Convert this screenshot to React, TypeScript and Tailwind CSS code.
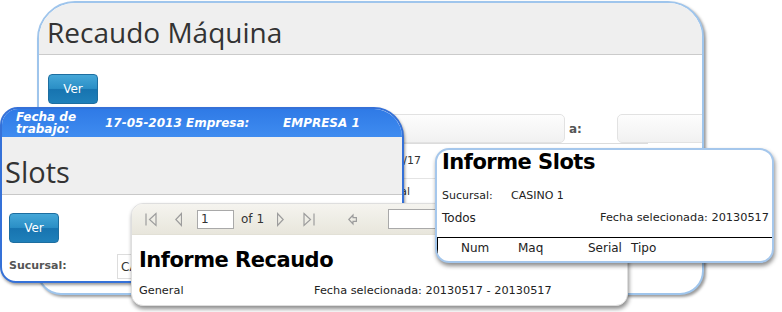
import type { ReactNode } from 'react';

const btn =
  "flex h-[30px] w-[50px] items-center justify-center rounded-[4px] border border-[#1d6ea0] bg-[linear-gradient(#45a7d8,#2b8fc6_48%,#1774b0_52%,#1f80ba)] text-[12px] text-white";

function VerButton() {
  return <div className={btn}>Ver</div>;
}

function Icon({ children, w = 12 }: { children: ReactNode; w?: number }) {
  return (
    <svg width={w} height="15" viewBox={`0 0 ${w} 15`} fill="none" stroke="#9d9d9d" strokeWidth="1.2">
      {children}
    </svg>
  );
}

function RecaudoMaquina() {
  return (
    <div className="absolute left-[37px] top-[1px] h-[294px] w-[667px] overflow-hidden rounded-tl-[38px] rounded-tr-[36px] rounded-bl-[24px] rounded-br-[24px] border-2 border-[#9fc5ec] bg-white shadow-[2px_2px_3px_rgba(0,0,0,0.4)]">
      <div className="h-[52px] border-b border-[#cbcbcb] bg-[#efefef] pl-[8px] pt-[15px]">
        <div className="font-['Open_Sans',sans-serif] text-[28px] leading-none text-[#333]">Recaudo Máquina</div>
      </div>
      <div className="pl-[9px] pt-[19px]">
        <VerButton />
        <div className="mt-[10px] flex h-[29px] items-center">
          <div className="ml-[332px] h-[29px] w-[185px] shrink-0 rounded-[5px] border border-[#e2e2e2] bg-[linear-gradient(#fdfdfd,#f1f1f1)]" />
          <div className="w-[52px] shrink-0 pl-[4px] text-[12px] font-bold text-[#555]">a:</div>
          <div className="h-[29px] w-[120px] shrink-0 rounded-[5px] border border-[#e2e2e2] bg-[linear-gradient(#fdfdfd,#f1f1f1)]" />
        </div>
        <div className="ml-[300px] w-[300px] border-t border-[#dcdcdc]">
          <div className="flex h-[35px] items-center border-b border-[#e4e4e4]">
            <span className="w-[73px] text-right text-[11px] text-[#333]">2013/05/17</span>
          </div>
          <div className="flex h-[26px] items-center">
            <span className="w-[62px] text-right text-[11px] text-[#333]">Sucursal</span>
          </div>
        </div>
      </div>
    </div>
  );
}

function Slots() {
  return (
    <div className="absolute left-0 top-[107px] h-[176px] w-[404px] overflow-hidden rounded-tl-[18px] rounded-tr-[30px] rounded-bl-[16px] border-2 border-[#3571d8] bg-white shadow-[1px_2px_3px_rgba(0,0,0,0.4)]">
      <div className="flex h-[28px] items-center bg-[linear-gradient(#2f7ae6,#3f8cf0)] text-[12px] font-bold italic text-white">
        <div className="w-[103px] pl-[14px] leading-[12.5px]">
          Fecha de
          <br />
          trabajo:
        </div>
        <div className="w-[178px]">17-05-2013 Empresa:</div>
        <div>EMPRESA 1</div>
      </div>
      <div className="h-[58px] border-b border-[#c8c8c8] bg-[#efefef] pl-[3px] pt-[20px]">
        <div className="font-['Open_Sans',sans-serif] text-[29px] leading-none text-[#333]">Slots</div>
      </div>
      <div className="pl-[7px] pt-[18px]">
        <VerButton />
        <div className="mt-[11px] flex h-[25px] items-center">
          <div className="w-[108px] text-[11px] font-bold text-[#555]">Sucursal:</div>
          <div className="flex h-[25px] w-[200px] items-center border border-[#dddddd] bg-white pl-[3px] text-[12px] text-[#333]">
            CA
          </div>
        </div>
      </div>
    </div>
  );
}

function InformeRecaudo() {
  return (
    <div className="absolute left-[131px] top-[203px] h-[103px] w-[497px] overflow-hidden rounded-[12px] border border-[#dedede] bg-white shadow-[1px_3px_4px_rgba(0,0,0,0.45)]">
      <div className="flex h-[31px] items-center border-b border-[#e2e0d6] bg-[linear-gradient(#f5f4ef,#e8e6dc)] pl-[13px] text-[12px] text-[#333]">
        <Icon>
          <path d="M1 1.5v12M11 1.5L4.5 7.5 11 13.5z" />
        </Icon>
        <div className="ml-[18px]">
          <Icon w={7}>
            <path d="M6.5 1.5L0.8 7.5 6.5 13.5z" />
          </Icon>
        </div>
        <div className="ml-[15px] flex h-[19px] w-[37px] items-center border border-[#a9a9a9] bg-white pl-[3px]">1</div>
        <div className="ml-[7px]">of 1</div>
        <div className="ml-[13px]">
          <Icon w={7}>
            <path d="M0.5 1.5L6.2 7.5 0.5 13.5z" />
          </Icon>
        </div>
        <div className="ml-[19px]">
          <Icon>
            <path d="M1 1.5L7.5 7.5 1 13.5zM11 1.5v12" />
          </Icon>
        </div>
        <div className="ml-[33px]">
          <Icon w={9}>
            <path d="M0.8 7.5L5 3v2.6h3.4v3.8H5V12z" />
          </Icon>
        </div>
        <div className="ml-[31px] h-[20px] w-[200px] border border-[#a9a9a9] bg-white" />
      </div>
      <div className="pl-[7px] pt-[15px]">
        <div className="text-[21px] font-bold leading-none tracking-[-0.5px] text-black">Informe Recaudo</div>
        <div className="mt-[13px] flex text-[11.3px] leading-[13px] text-[#222]">
          <span className="w-[175px]">General</span>
          <span>Fecha selecionada: 20130517 - 20130517</span>
        </div>
      </div>
    </div>
  );
}

function InformeSlots() {
  return (
    <div className="absolute left-[435px] top-[148px] h-[115px] w-[339px] overflow-hidden rounded-[14px] border-2 border-[#a5c7ec] bg-white shadow-[1px_3px_4px_rgba(0,0,0,0.45)]">
      <div className="pl-[5px] pt-[2px]">
        <div className="text-[21px] font-bold leading-none tracking-[-0.5px] text-black">Informe Slots</div>
        <div className="mt-[16px] flex text-[11px] leading-[13px] text-[#222]">
          <span className="w-[69px]">Sucursal:</span>
          <span>CASINO 1</span>
        </div>
        <div className="mt-[9px] flex items-center justify-between pr-[3px] text-[#222]">
          <span className="text-[12px] leading-[14px]">Todos</span>
          <span className="text-[11.3px] leading-[14px]">Fecha selecionada: 20130517</span>
        </div>
      </div>
      <div className="mt-[12px] flex h-[30px] border-l border-t border-black pt-[3px] text-[12px] leading-[14px] text-[#222]">
        <span className="w-[80px] pl-[23px]">Num</span>
        <span className="w-[70px]">Maq</span>
        <span className="w-[43px]">Serial</span>
        <span>Tipo</span>
      </div>
    </div>
  );
}

export default function App() {
  return (
    <div className="relative h-[312px] w-[782px] overflow-hidden bg-white font-['DejaVu_Sans',Verdana,sans-serif]">
      <RecaudoMaquina />
      <Slots />
      <InformeRecaudo />
      <InformeSlots />
    </div>
  );
}
